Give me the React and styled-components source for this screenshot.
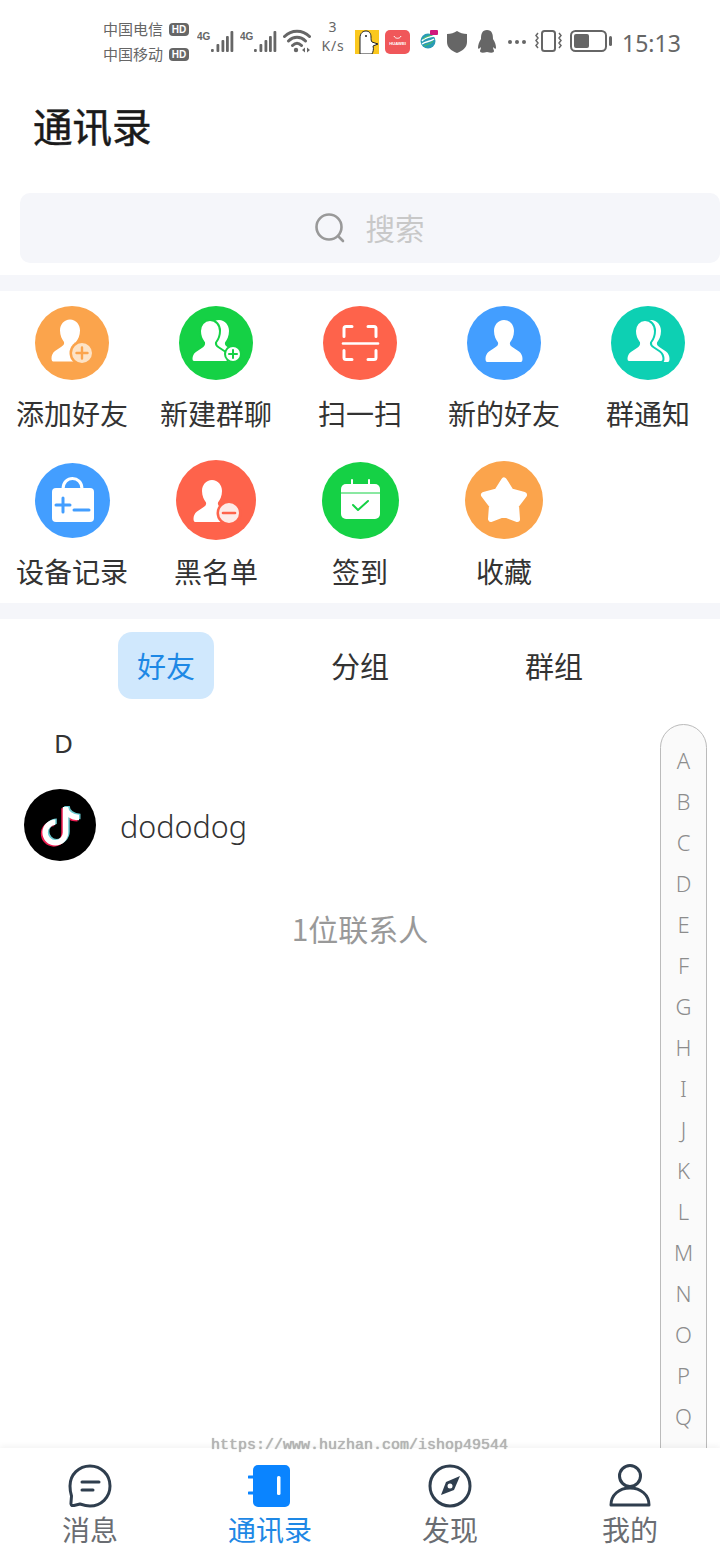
import React from 'react';
import styled, { createGlobalStyle } from 'styled-components';

const Global = createGlobalStyle`
  html, body { margin: 0; padding: 0; background: #fff; }
  * { box-sizing: border-box; }
  body { font-family: "Noto Sans", "Noto Sans CJK SC", sans-serif; }
`;
const CJK = `"Noto Sans CJK SC", "Noto Sans", sans-serif`;

const Page = styled.div`
  position: relative; width: 720px; height: 1560px; overflow: hidden;
  display: flex; flex-direction: column; background: #fff; font-family: ${CJK};
`;
const Main = styled.main`flex: 1; min-height: 0; position: relative; overflow: hidden;`;

/* status bar */
const StatusBar = styled.div`
  height: 72px; display: flex; align-items: flex-start; padding: 18px 0 0 103px; color: #666;
`;
const Carriers = styled.div`display: flex; flex-direction: column; gap: 3px; width: 94px;`;
const Carrier = styled.div`display: flex; align-items: center; height: 22px; font-size: 15px; line-height: 22px; color: #666;`;
const HD = styled.span`
  margin-left: 6px; width: 20px; height: 13px; border-radius: 4px; background: #666; color: #fff;
  font: 700 10px/13px "Liberation Sans", sans-serif; text-align: center;
`;
const StatusIcon = styled.svg`flex: none; display: block; margin: ${p => p.$m || '0'};`;
const Speed = styled.div`
  width: 26px; margin: -1px 9px 0 9px; text-align: center; color: #666;
  font: 400 14px/19px "Noto Sans", sans-serif; letter-spacing: .8px;
`;
const Time = styled.div`margin: 9px 0 0 10px; font: 400 23px/32px "Noto Sans", sans-serif; color: #666;`;

/* heading + search */
const Title = styled.h1`
  margin: 0; height: 121px; padding: 25px 0 0 33px; font: 400 39.500px/56px ${CJK}; color: #1a1a1a;
  -webkit-text-stroke: .5px #1a1a1a;
`;
const Search = styled.div`
  margin-left: 20px; height: 70px; border-radius: 10px; background: #f5f6fa;
  display: flex; align-items: center; justify-content: center; gap: 19px; padding-right: 1px;
  color: #c8c8c8; font-size: 29.500px;
`;
const SearchText = styled.span`line-height: 40px; margin-top: -2px;`;
const Band = styled.div`height: 16px; background: #f5f6fa; margin-top: ${p => p.$mt || 0}px;`;

/* shortcuts */
const Shortcuts = styled.div`
  display: grid; grid-template-columns: repeat(5, 144px); row-gap: 29px; padding: 15px 0 14px;
`;
const Shortcut = styled.div`display: flex; flex-direction: column; align-items: center;`;
const Slot = styled.div`height: ${p => p.$h}px; display: flex; align-items: center; justify-content: center;`;
const Disc = styled.svg`display: block; border-radius: 50%;`;
const ShortcutLabel = styled.div`
  margin-top: ${p => p.$mt}px; font-size: 28px; line-height: 36px; color: #333; white-space: nowrap;
`;

/* tabs */
const Tabs = styled.div`display: flex; justify-content: center; padding: 13px 0 25px;`;
const TabSlot = styled.div`width: 194px; display: flex; justify-content: center;`;
const Tab = styled.div`
  width: 96px; height: 67px; border-radius: 14px; text-align: center;
  font-size: 29px; line-height: 67px;
  background: ${p => (p.$active ? '#d0e8fd' : 'transparent')};
  color: ${p => (p.$active ? '#1e88e5' : '#333')};
`;

/* list */
const Section = styled.div`
  height: 40px; padding-left: 54px; margin-top: -1px;
  font: 400 26px/40px "Noto Sans", sans-serif; color: #333;
`;
const Contact = styled.div`display: flex; align-items: center; gap: 24px; margin: 26px 0 0 24px;`;
const Avatar = styled.svg`display: block; flex: none; border-radius: 50%;`;
const Name = styled.div`
  font: 300 30.500px/40px "Noto Sans", sans-serif; color: #333; padding-top: 2px;
`;
const Count = styled.div`margin-top: 47px; text-align: center; font-size: 30px; line-height: 40px; color: #999;`;

/* index rail */
const Rail = styled.div`
  position: absolute; left: 660px; top: 652px; width: 47px; height: 1100px; padding-top: 15px;
  border: 1.500px solid #bbb; border-radius: 24px 24px 0 0; background: #fafafa;
`;
const RailLetter = styled.div`
  height: 41px; text-align: center; font: 300 22px/41px "Noto Sans", sans-serif; color: #8c8c8c;
`;

/* bottom nav */
const Nav = styled.nav`
  position: relative; z-index: 2; height: 112px; flex: none; display: flex; background: #fff;
  box-shadow: 0 -2px 6px rgba(0, 0, 0, .05);
`;
const NavItem = styled.div`
  width: 180px; padding-top: 16px; display: flex; flex-direction: column; align-items: center;
  color: ${p => (p.$active ? '#1e88e5' : '#6a6d72')};
`;
const NavLabel = styled.div`font-size: 28px; line-height: 40px; margin-top: 1px;`;
const Watermark = styled.div`
  position: absolute; z-index: 3; left: 211px; top: 1437px; white-space: nowrap;
  font: 400 15px/18px "Liberation Mono", monospace; color: #b4b4b4; text-shadow: 0 0 1px #999;
`;

const Signal = ({ m }) => (
  <StatusIcon width="37" height="24" viewBox="0 0 37 24" $m={m}>
    <text x="0" y="10" fontSize="10" fontWeight="700" fontFamily="Liberation Sans" fill="#666">4G</text>
    {[[14, 3], [19.5, 8], [24.5, 12], [29, 16], [33.5, 21]].map(([x, h]) => (
      <rect key={x} x={x} y={22 - h} width="2.800" height={h} rx="1" fill="#666" />
    ))}
  </StatusIcon>
);

const person = 'M37 14C43 14 47 19 47 25C47 30 45 34 43 36.500C42.500 38.500 43.500 40 46 41.500L52 45.500C54.500 47.500 55.500 50 55.500 53C55.500 55.500 54.500 56 53 56L21 56C19.500 56 18.500 55.500 18.500 53C18.500 50 19.500 47.500 22 45.500L28 41.500C30.500 40 31.500 38.500 31 36.500C29 34 27 30 27 25C27 19 31 14 37 14Z';

const DiscIcon = ({ size, color, children }) => (
  <Disc width={size} height={size} viewBox={`0 0 ${size} ${size}`} style={{ background: color }}>{children}</Disc>
);

const icons = {
  add: (
    <DiscIcon size={74} color="#fba44c">
      <path d={person} fill="#fff" transform="translate(-2 -0.500)" />
      <circle cx="47" cy="47" r="12.500" fill="#fba44c" />
      <circle cx="47" cy="47" r="10" fill="#fde3c6" />
      <path d="M47 41.500v11M41.500 47h11" stroke="#fba44c" strokeWidth="2.400" strokeLinecap="round" />
    </DiscIcon>
  ),
  group: (
    <DiscIcon size={74} color="#15d145">
      <path d={person} fill="#fff" transform="translate(3 0)" />
      <path d={person} fill="#fff" stroke="#15d145" strokeWidth="2" transform="translate(-6 0)" />
      <circle cx="54" cy="48" r="9" fill="#15d145" />
      <circle cx="54" cy="48" r="7" fill="#fff" />
      <path d="M54 44v8M50 48h8" stroke="#15d145" strokeWidth="2" strokeLinecap="round" />
    </DiscIcon>
  ),
  scan: (
    <DiscIcon size={74} color="#fe634b">
      <path d="M29 20.500h-6a2 2 0 0 0-2 2v8M45 20.500h6a2 2 0 0 1 2 2v8M29 53.500h-6a2 2 0 0 1-2-2v-7M45 53.500h6a2 2 0 0 0 2-2v-7" fill="none" stroke="#fff" strokeWidth="3" strokeLinecap="round" />
      <path d="M20 37.500h35" stroke="#fff" strokeWidth="2.600" strokeLinecap="round" />
    </DiscIcon>
  ),
  friend: (
    <DiscIcon size={74} color="#439eff">
      <path d={person} fill="#fff" />
    </DiscIcon>
  ),
  notice: (
    <DiscIcon size={74} color="#0dd0b3">
      <path d={person} fill="#fff" transform="translate(3 0)" />
      <path d={person} fill="#fff" stroke="#0dd0b3" strokeWidth="2" transform="translate(-3 0)" />
    </DiscIcon>
  ),
  device: (
    <DiscIcon size={75} color="#439eff">
      <path d="M28 26c0-14 19-14 19 0" fill="none" stroke="#fff" strokeWidth="3" />
      <rect x="17" y="25" width="42" height="34" rx="4" fill="#fff" />
      <path d="M21 42h14M28 35v14M39 47h15" stroke="#439eff" strokeWidth="3" strokeLinecap="round" />
    </DiscIcon>
  ),
  black: (
    <DiscIcon size={80} color="#fe634b">
      <path d={person} fill="#fff" transform="translate(-1 6)" />
      <circle cx="53" cy="53" r="12.500" fill="#fe634b" />
      <circle cx="53" cy="53" r="10" fill="#fdebe7" />
      <path d="M47 53h12" stroke="#fe634b" strokeWidth="2.600" strokeLinecap="round" />
    </DiscIcon>
  ),
  sign: (
    <DiscIcon size={77} color="#15d145">
      <path d="M30 18v8M47 18v8" stroke="#fff" strokeWidth="2" strokeLinecap="round" />
      <rect x="19" y="22" width="39" height="35" rx="5" fill="#fff" />
      <path d="M19 31h39" stroke="#15d145" strokeWidth="1" />
      <path d="M31 43l5 5 10-9" fill="none" stroke="#15d145" strokeWidth="2" strokeLinecap="round" strokeLinejoin="round" />
    </DiscIcon>
  ),
  star: (
    <DiscIcon size={78} color="#fba44c">
      <polygon points="39,19.500 46,30.500 59,34 51,44.500 52,58 39,53 26,58 27,44.500 19,34 32,30.500" fill="#fff" stroke="#fff" strokeWidth="6" strokeLinejoin="round" />
    </DiscIcon>
  ),
};

const rows = [
  { h: 74, mt: 15, items: [['add', '添加好友'], ['group', '新建群聊'], ['scan', '扫一扫'], ['friend', '新的好友'], ['notice', '群通知']] },
  { h: 80, mt: 13, items: [['device', '设备记录'], ['black', '黑名单'], ['sign', '签到'], ['star', '收藏']] },
];

const note = 'M41.500 18V43.500A10.200 10.200 0 1 1 31.300 33.300M41.500 18C41.500 24 47.500 28.500 55 28.500';

export default function App() {
  return (
    <Page>
      <Global />
      <StatusBar>
        <Carriers>
          <Carrier>中国电信<HD>HD</HD></Carrier>
          <Carrier>中国移动<HD>HD</HD></Carrier>
        </Carriers>
        <Signal m="12px 6px 0 0" />
        <Signal m="12px 6px 0 0" />
        <StatusIcon width="28" height="26" viewBox="0 0 28 26" $m="10px 0 0 0">
          <path d="M1.500 8.500C8.500 1.500 19.500 1.500 26.500 8.500M5.500 13C10.500 8 17.500 8 22.500 13M9.500 17.500C12.500 14.500 15.500 14.500 18.500 17.500" fill="none" stroke="#666" strokeWidth="3" strokeLinecap="round" />
          <circle cx="13" cy="22" r="2.200" fill="#666" />
          <path d="M19 22l3-2.500v5zM24 19.500l3 2.500-3 2.500z" fill="#666" />
        </StatusIcon>
        <Speed>3<br />K/s</Speed>
        <StatusIcon width="24" height="24" viewBox="0 0 24 24" $m="12px 6px 0 0">
          <rect width="24" height="24" fill="#fbc81e" />
          <path d="M5 24V8C5 3 8 1 11 1s5 2 5 6c0 2 0 4 1 5l6 2-5 2c1 3 0 6-1 8z" fill="#fff" stroke="#222" strokeWidth="1" />
          <circle cx="11" cy="6" r="1" fill="#222" />
        </StatusIcon>
        <StatusIcon width="25" height="24" viewBox="0 0 25 24" $m="12px 10px 0 0">
          <rect width="25" height="24" rx="5" fill="#f0575a" />
          <path d="M9 6c1 3 6 3 7 0" fill="none" stroke="#fff" strokeWidth="1" />
          <text x="12.500" y="15" textAnchor="middle" fontSize="4.200" fontWeight="700" fontFamily="Liberation Sans" fill="#fff">HUAWEI</text>
        </StatusIcon>
        <StatusIcon width="18" height="20" viewBox="0 0 18 20" $m="12px 9px 0 0">
          <circle cx="8" cy="11" r="7.500" fill="#2a9bb5" />
          <path d="M2 11c3-4 8-4 12-5M2 14c4-3 8-2 12-5" fill="none" stroke="#fff" strokeWidth="1.500" />
          <path d="M3 9c4-3 7-3 9-4M4 16c4-2 7-2 9-5" fill="none" stroke="#4cc35a" strokeWidth="1" />
          <rect x="10" y="0" width="8" height="5" rx="1" fill="#d0187d" />
        </StatusIcon>
        <StatusIcon width="20" height="22" viewBox="0 0 20 22" $m="13px 10px 0 0">
          <path d="M10 0c3 2 6 3 10 3v8c0 6-5 9-10 11C5 20 0 17 0 11V3c4 0 7-1 10-3z" fill="#666" />
        </StatusIcon>
        <StatusIcon width="20" height="24" viewBox="0 0 20 24" $m="12px 11px 0 0">
          <path d="M10 0c5 0 6 4 6 9 2 3 3 6 3 9 0 1-1 1-2 0l-1-1c0 2 1 3 1 4 0 2-3 2-7 1-4 1-7 1-7-1 0-1 1-2 1-4l-1 1c-1 1-2 1-2 0 0-3 1-6 3-9 0-5 1-9 6-9z" fill="#666" />
        </StatusIcon>
        <StatusIcon width="18" height="6" viewBox="0 0 18 6" $m="21px 9px 0 0">
          <circle cx="2" cy="3" r="2" fill="#666" /><circle cx="9" cy="3" r="2" fill="#666" /><circle cx="16" cy="3" r="2" fill="#666" />
        </StatusIcon>
        <StatusIcon width="27" height="22" viewBox="0 0 27 22" $m="12px 8px 0 0">
          <rect x="7" y="1" width="13" height="20" rx="2.500" fill="none" stroke="#666" strokeWidth="2" />
          <path d="M3 3L1 5.500l2 2.500-2 2.500 2 2.500-2 2.500 2 2.500M24 3l2 2.500-2 2.500 2 2.500-2 2.500 2 2.500-2 2.500" fill="none" stroke="#666" strokeWidth="1.500" />
        </StatusIcon>
        <StatusIcon width="42" height="22" viewBox="0 0 42 22" $m="12px 0 0 0">
          <rect x="1" y="1" width="35" height="20" rx="4.500" fill="none" stroke="#666" strokeWidth="2" />
          <rect x="4" y="4" width="15" height="14" rx="2" fill="#666" />
          <rect x="39" y="6" width="3" height="10" rx="1.500" fill="#666" />
        </StatusIcon>
        <Time>15:13</Time>
      </StatusBar>
      <Main>
        <Title>通讯录</Title>
        <Search>
          <svg width="32" height="32" viewBox="0 0 32 32" fill="none" stroke="#999" strokeWidth="2.600" strokeLinecap="round">
            <circle cx="15" cy="15" r="12.500" />
            <path d="M25 25l4 4" />
          </svg>
          <SearchText>搜索</SearchText>
        </Search>
        <Band $mt={12} />
        <Shortcuts>
          {rows.map(r => r.items.map(([k, label]) => (
            <Shortcut key={k}>
              <Slot $h={r.h}>{icons[k]}</Slot>
              <ShortcutLabel $mt={r.mt}>{label}</ShortcutLabel>
            </Shortcut>
          )))}
        </Shortcuts>
        <Band />
        <Tabs>
          <TabSlot><Tab $active>好友</Tab></TabSlot>
          <TabSlot><Tab>分组</Tab></TabSlot>
          <TabSlot><Tab>群组</Tab></TabSlot>
        </Tabs>
        <Section>D</Section>
        <Contact>
          <Avatar width="72" height="72" viewBox="0 0 72 72">
            <rect width="72" height="72" fill="#000" />
            <g fill="none" strokeWidth="5.500">
              <path d={note} stroke="#ee1d52" transform="translate(-1.500 1.200)" />
              <path d={note} stroke="#69c9d0" transform="translate(1.500 -1)" />
              <path d={note} stroke="#fff" />
            </g>
          </Avatar>
          <Name>dododog</Name>
        </Contact>
        <Count>1位联系人</Count>
        <Rail>
          {'ABCDEFGHIJKLMNOPQ'.split('').map(l => <RailLetter key={l}>{l}</RailLetter>)}
        </Rail>
      </Main>
      <Nav>
        <NavItem>
          <svg width="44" height="44" viewBox="0 0 44 44" fill="none" stroke="#2f3e4e" strokeWidth="3" strokeLinecap="round" strokeLinejoin="round">
            <path d="M22 2C33 2 42 10.500 42 22S33 42 22 42C18 42 15 41 12 40L6 41.500C3.500 42 2.500 40.500 3 38.500L3.500 32C2.500 29 2 25.500 2 22 2 10.500 11 2 22 2Z" />
            <path d="M14 18h17M14 26h11" />
          </svg>
          <NavLabel>消息</NavLabel>
        </NavItem>
        <NavItem $active>
          <svg width="44" height="44" viewBox="0 0 44 44">
            <rect x="5" y="1" width="37" height="42" rx="5" fill="#0a84ff" />
            <path d="M1 13h5M1 29h5" stroke="#0a84ff" strokeWidth="3" strokeLinecap="round" />
            <rect x="29" y="12" width="3.500" height="19" rx="1.500" fill="#fff" />
          </svg>
          <NavLabel>通讯录</NavLabel>
        </NavItem>
        <NavItem>
          <svg width="44" height="44" viewBox="0 0 44 44">
            <circle cx="22" cy="22" r="20" fill="none" stroke="#2f3e4e" strokeWidth="3" />
            <path d="M32 12L26 26 13 31 18 18z" fill="#2f3e4e" />
            <circle cx="22" cy="22" r="2.500" fill="#fff" />
          </svg>
          <NavLabel>发现</NavLabel>
        </NavItem>
        <NavItem>
          <svg width="44" height="44" viewBox="0 0 44 44" fill="none" stroke="#2f3e4e" strokeWidth="3" strokeLinejoin="round">
            <circle cx="22" cy="12" r="10.500" />
            <path d="M3 41C3 31 11 24 22 24S41 31 41 41Z" />
          </svg>
          <NavLabel>我的</NavLabel>
        </NavItem>
      </Nav>
      <Watermark>https://www.huzhan.com/ishop49544</Watermark>
    </Page>
  );
}
